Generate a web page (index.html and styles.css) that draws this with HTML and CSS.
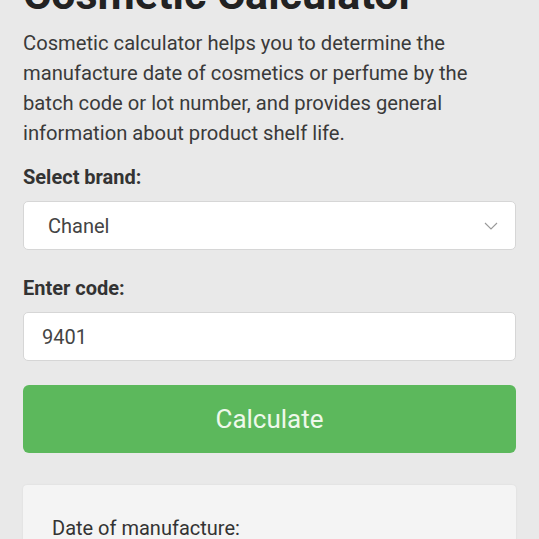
FILE: index.html
```html
<!DOCTYPE html>
<html lang="en">
<head>
<meta charset="utf-8">
<link rel="stylesheet" href="styles.css">
</head>
<body>
<main class="page">
  <h1 class="title">Cosmetic Calculator</h1>
  <p class="intro">Cosmetic calculator helps you to determine the manufacture date of cosmetics or perfume by the batch code or lot number, and provides general information about product shelf life.</p>
  <form class="form">
    <div class="group">
      <label class="label">Select brand:</label>
      <div class="select">
        <span class="select-value">Chanel</span>
        <svg class="chevron" width="14" height="8" viewBox="0 0 14 8"><path d="M1 1 L7 7 L13 1" fill="none" stroke="#999" stroke-width="1.1"/></svg>
      </div>
    </div>
    <div class="group">
      <label class="label">Enter code:</label>
      <div class="input">9401</div>
    </div>
    <div class="button">Calculate</div>
  </form>
  <section class="result">
    <p class="result-label">Date of manufacture:</p>
  </section>
</main>
</body>
</html>
```
FILE: styles.css
```css
html, body {
  margin: 0;
  padding: 0;
  background: #e9e9e9;
  overflow: hidden;
}
.page {
  padding: 0 23px;
  font-family: Roboto, "Noto Sans", sans-serif;
  color: #333;
}
.title {
  font-size: 43px;
  font-weight: 700;
  line-height: 48px;
  margin: -30px 0 0;
  color: #222;
  white-space: nowrap;
}
.intro {
  font-size: 20.2px;
  line-height: 30px;
  margin: 10px 0 0;
  color: #3a3a3a;
}
.form {
  display: flex;
  flex-direction: column;
  gap: 25px;
  margin-top: 16px;
}
.group {
  display: flex;
  flex-direction: column;
  gap: 11px;
}
.label {
  font-size: 20px;
  font-weight: 700;
  line-height: 26px;
  color: #333;
}
.select, .input {
  box-sizing: border-box;
  height: 49px;
  background: #fff;
  border: 1px solid #d6d6d6;
  border-radius: 5px;
  display: flex;
  align-items: center;
  font-size: 20px;
  color: #444;
}
.select {
  padding: 0 17px 0 24px;
  justify-content: space-between;
}
.input {
  padding: 0 18px;
}
.button {
  margin-top: -1px;
  height: 68px;
  background: #5cb85c;
  border-radius: 6px;
  color: #eef8ea;
  font-size: 26px;
  display: flex;
  align-items: center;
  justify-content: center;
}
.result {
  margin-top: 32px;
  background: #f4f4f4;
  border-radius: 4px 4px 0 0;
  box-shadow: 0 0 2px rgba(0,0,0,0.08);
  padding: 30px 29px 0;
  height: 80px;
}
.result-label {
  margin: 0;
  font-size: 20px;
  line-height: 26px;
  color: #333;
}
```
